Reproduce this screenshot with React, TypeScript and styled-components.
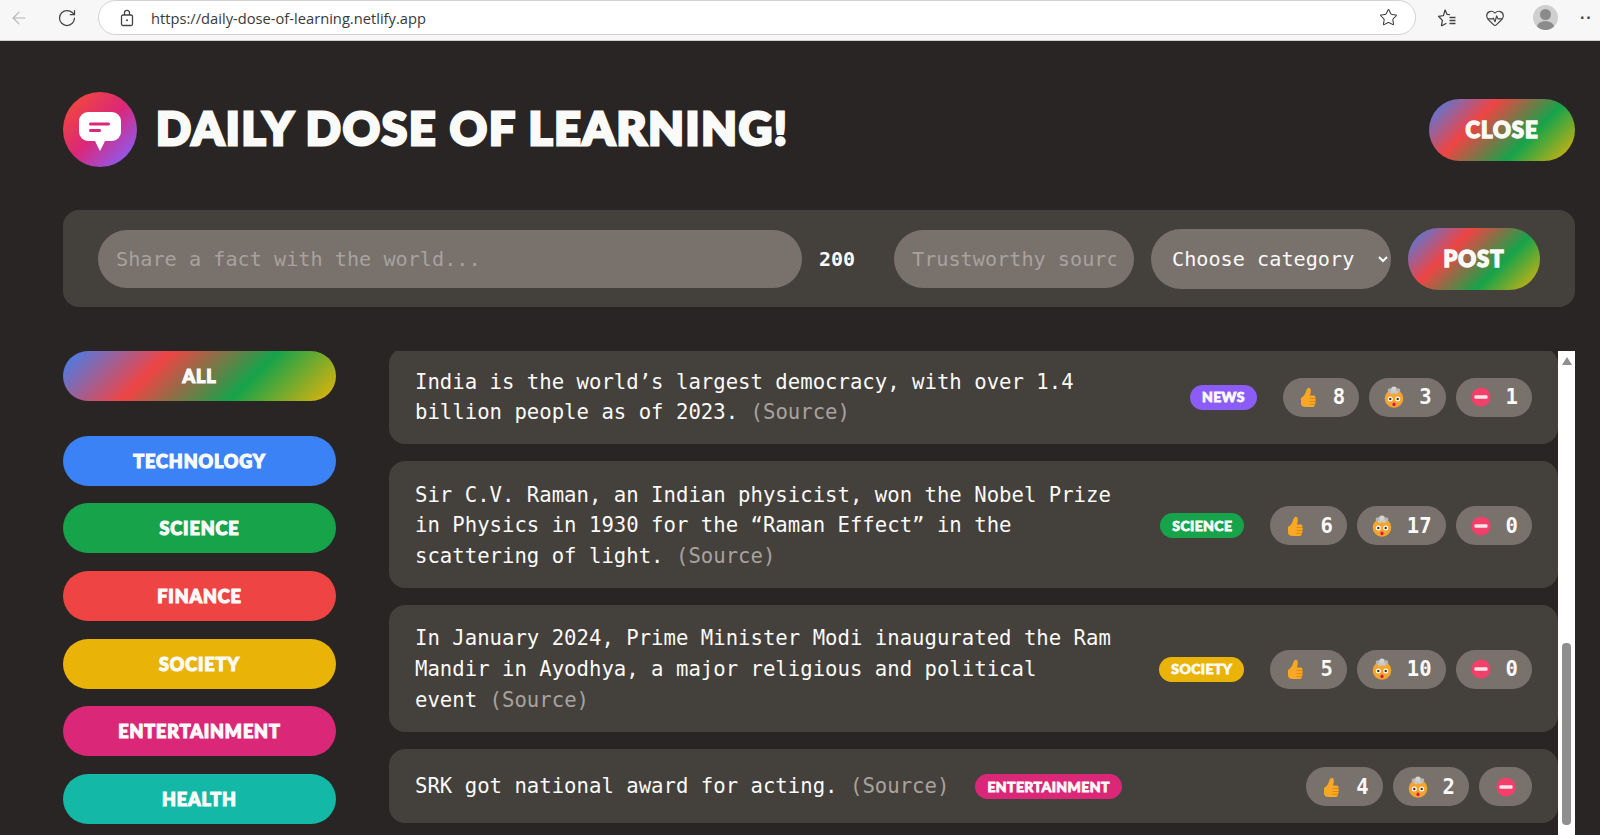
import React from 'react';
import styled, { createGlobalStyle, css } from 'styled-components';
import { ArrowLeft, RotateCw, Star, HeartPulse } from 'lucide-react';

const rainbow = 'linear-gradient(135deg, #3b82f6, #ef4444, #16a34a, #eab308)';
const monoFont = '"DejaVu Sans Mono", "Liberation Mono", monospace';
const displayFont = '"Lato", "DejaVu Sans", sans-serif';

const display = css`
    font-family: ${displayFont};
    font-weight: 900;
    color: #fafaf9;
    -webkit-text-stroke: 1.2px #fafaf9;
    text-transform: uppercase;
`;

const GlobalStyle = createGlobalStyle`
    * {
        box-sizing: border-box;
        margin: 0;
        padding: 0;
    }

    html, body {
        height: 835px;
        overflow: hidden;
        background: #292524;
    }

    input::placeholder {
        color: #a8a29e;
    }
`;

const BrowserBar = styled.div`
    display: flex;
    align-items: center;
    height: 41px;
    padding: 0 0 5px 9px;
    background: #f7f7f7;
    border-bottom: 1px solid #cfcfcf;
    color: #444;
    overflow: hidden;
`;

const BarIcon = styled.span<{ $faded?: boolean; $width: number; $gap: number }>`
    display: flex;
    justify-content: center;
    flex-shrink: 0;
    width: ${p => p.$width}px;
    margin-left: ${p => p.$gap}px;
    color: ${p => (p.$faded ? '#b4b4b4' : '#444')};
`;

const AddressPill = styled.div`
    display: flex;
    align-items: center;
    flex-shrink: 0;
    width: 1318px;
    height: 35px;
    margin-left: 20px;
    padding: 0 17px 0 20px;
    background: #fff;
    border: 1.5px solid #d2d2d2;
    border-radius: 18px;
    font: 14.7px "Open Sans", sans-serif;
    color: #3a3a3a;
`;

const Url = styled.span`
    flex: 1;
    margin-left: 16px;
`;

const Avatar = styled.span`
    position: relative;
    flex-shrink: 0;
    width: 25px;
    height: 25px;
    margin-left: 27px;
    border-radius: 50%;
    background: #cfcfcf;
    overflow: hidden;

    &::before {
        content: '';
        position: absolute;
        left: 7px;
        top: 4px;
        width: 11px;
        height: 11px;
        border-radius: 50%;
        background: #8b8b8b;
    }

    &::after {
        content: '';
        position: absolute;
        left: 4px;
        top: 16px;
        width: 17px;
        height: 12px;
        border-radius: 50%;
        background: #8b8b8b;
    }
`;

const Dots = styled.span`
    margin-left: 22px;
    font: bold 16px "Liberation Sans", sans-serif;
    letter-spacing: 1px;
    color: #444;
`;

const Page = styled.div`
    padding: 51px 25px 0 63px;
    font-family: ${monoFont};
    color: #fafaf9;
`;

const Header = styled.header`
    display: flex;
    align-items: center;
    justify-content: space-between;
    height: 75px;
    margin-bottom: 43px;
`;

const Brand = styled.div`
    display: flex;
    align-items: center;
    gap: 19px;
`;

const LogoBadge = styled.div`
    display: flex;
    align-items: center;
    justify-content: center;
    width: 74px;
    height: 75px;
    padding-top: 4px;
    border-radius: 50%;
    background: linear-gradient(135deg, #ef4444 15%, #db2777 50%, #8b5cf6 90%);
`;

const Title = styled.h1`
    ${display}
    margin-top: -4px;
    font-size: 46px;
    line-height: 1;
    letter-spacing: 1.8px;
    -webkit-text-stroke-width: 3px;
`;

const GradientButton = styled.button<{ $width: number; $height: number; $size: number }>`
    ${display}
    width: ${p => p.$width}px;
    height: ${p => p.$height}px;
    flex-shrink: 0;
    border: none;
    border-radius: 100px;
    background: ${rainbow};
    font-size: ${p => p.$size}px;
    letter-spacing: 1px;
    -webkit-text-stroke-width: 1.5px;
`;

const FactForm = styled.form`
    display: flex;
    align-items: center;
    gap: 17px;
    height: 97px;
    margin-bottom: 44px;
    padding: 0 35px;
    background: #44403c;
    border-radius: 16px;
`;

const field = css`
    height: 58px;
    border: none;
    border-radius: 100px;
    background: #78716c;
    font-family: ${monoFont};
    font-size: 20.2px;
    color: #fafaf9;
`;

const FactInput = styled.input`
    ${field}
    flex: 1;
    min-width: 0;
    padding: 0 18px;
`;

const CharCount = styled.span`
    width: 58px;
    flex-shrink: 0;
    font-size: 20px;
    font-weight: 700;
`;

const SourceInput = styled.input`
    ${field}
    flex-shrink: 0;
    width: 240px;
    padding: 0 18px;
`;

const CategorySelect = styled.select`
    ${field}
    flex-shrink: 0;
    width: 240px;
    height: 60px;
    padding: 0 17px;
`;

const Main = styled.main`
    display: grid;
    grid-template-columns: 273px 1fr;
    column-gap: 53px;
    height: 484px;
`;

const CategoryList = styled.ul`
    display: flex;
    flex-direction: column;
    gap: 17.7px;
    list-style: none;
`;

const CategoryButton = styled.button<{ $bg: string; $all?: boolean }>`
    ${display}
    width: 100%;
    height: 50px;
    border: none;
    border-radius: 100px;
    background: ${p => p.$bg};
    font-size: 18px;
    letter-spacing: 0.9px;
    ${p => p.$all && 'margin-bottom: 17px;'}
`;

const FactArea = styled.div`
    display: flex;
    min-width: 0;
    overflow: hidden;
`;

const FactList = styled.ul`
    flex: 1;
    min-width: 0;
    display: flex;
    flex-direction: column;
    gap: 17px;
    margin-top: -3px;
    list-style: none;
`;

const Fact = styled.li`
    display: flex;
    align-items: center;
    gap: 26px;
    padding: 18.5px 26px 16.5px;
    background: #44403c;
    border-radius: 16px;
`;

const FactText = styled.p`
    font-size: 20.65px;
    line-height: 30.6px;
`;

const SourceLink = styled.a`
    color: #a8a29e;
`;

const Tag = styled.span<{ $bg: string }>`
    ${display}
    flex-shrink: 0;
    padding: 4.5px 12px;
    border-radius: 100px;
    background: ${p => p.$bg};
    font-size: 14px;
    line-height: 16px;
    letter-spacing: 0.4px;
    -webkit-text-stroke-width: 0.8px;
`;

const Votes = styled.div`
    display: flex;
    flex-shrink: 0;
    gap: 10px;
    margin-left: auto;
`;

const VoteButton = styled.button`
    display: flex;
    align-items: center;
    justify-content: center;
    gap: 15px;
    min-width: 53px;
    height: 39px;
    padding: 0 14px 0 15px;
    border: none;
    border-radius: 100px;
    background: #78716c;
    font-family: ${monoFont};
    font-size: 20.6px;
    font-weight: 700;
    color: #fafaf9;
`;

const Scrollbar = styled.div`
    flex-shrink: 0;
    display: flex;
    flex-direction: column;
    align-items: center;
    width: 17px;
    padding-top: 6px;
    background: #fff;
`;

const ScrollArrow = styled.span`
    width: 0;
    height: 0;
    border-left: 5.5px solid transparent;
    border-right: 5.5px solid transparent;
    border-bottom: 8px solid #8f8f8f;
`;

const ScrollThumb = styled.span`
    width: 9px;
    height: 182px;
    margin-top: 278px;
    background: #8f8f8f;
    border-radius: 4px;
`;

const Thumb = () => (
    <svg width="20" height="22" viewBox="0 0 20 22">
        <path d="M3 12c2.500-1.500 4.500-4 5.500-8 .5-2.500 3.500-3.500 4.200-.5.5 2.500-.5 4.500-.7 6h3.500c2 0 2.500 2 1.500 3 1 .8 1 2.300 0 3 .8.800.7 2.200-.3 2.800.4 1.400-.5 2.700-2 2.700H8c-3 0-5-1-5-3.500z" fill="#f9a825" />
        <path d="M11.500 12.500h6M11.500 15.500h6M11.500 18.300h5" stroke="#e0860e" strokeWidth="0.9" fill="none" />
    </svg>
);

const MindBlown = () => (
    <svg width="20" height="22" viewBox="0 0 20 22">
        <circle cx="10" cy="12.500" r="9.300" fill="#f5a52c" />
        <circle cx="6" cy="4.500" r="2.300" fill="#b9b6b4" />
        <circle cx="10" cy="3.200" r="2.800" fill="#d6d4d2" />
        <circle cx="14" cy="4.500" r="2.300" fill="#b9b6b4" />
        <circle cx="8" cy="6.200" r="2" fill="#c9c6c4" />
        <circle cx="12" cy="6.200" r="2" fill="#c9c6c4" />
        <circle cx="6.300" cy="13" r="2.500" fill="#fff" />
        <circle cx="13.700" cy="13" r="2.500" fill="#fff" />
        <circle cx="6.300" cy="13" r="1.200" fill="#4a2c1a" />
        <circle cx="13.700" cy="13" r="1.200" fill="#4a2c1a" />
        <ellipse cx="10" cy="18.300" rx="1.500" ry="1.900" fill="#d6134f" />
    </svg>
);

const NoEntry = () => (
    <svg width="20" height="20" viewBox="0 0 20 20">
        <circle cx="10" cy="10" r="9.600" fill="#f43f6b" />
        <rect x="3.500" y="8.300" width="13" height="3.400" rx="1" fill="#f6e6ea" />
    </svg>
);

const FavoritesIcon = () => (
    <svg width="20" height="20" viewBox="0 0 20 20" fill="none" stroke="#444" strokeWidth="1.300" strokeLinejoin="round">
        <path d="M8 1.800l2 4.500 3 .4M4.400 18l1-5.600L1.500 8.300l5-.7L8 1.800M4.400 18l5-2.800" />
        <path d="M12.500 9.500h6M12.500 12.500h6M12.500 15.500h6" />
    </svg>
);

const LockIcon = () => (
    <svg width="16" height="18" viewBox="0 0 16 18" fill="none" stroke="#444" strokeWidth="1.300">
        <rect x="2.500" y="6" width="11" height="10.500" rx="1.500" />
        <path d="M5.500 6V3.800a2.500 2.500 0 0 1 5 0V6" />
        <circle cx="8" cy="11.300" r="1" fill="#444" stroke="none" />
    </svg>
);

const LogoMark = () => (
    <svg width="42" height="39" viewBox="0 0 42 39">
        <path d="M9 0h24a9 9 0 0 1 9 9v11a9 9 0 0 1-9 9h-7l-5 10-5-10H9a9 9 0 0 1-9-9V9a9 9 0 0 1 9-9z" fill="#fff" />
        <rect x="10" y="10.500" width="21" height="3" rx="1.500" fill="#db2777" />
        <rect x="10" y="17" width="12" height="3" rx="1.500" fill="#db2777" />
    </svg>
);

const categories = [
    { name: 'technology', color: '#3b82f6' },
    { name: 'science', color: '#16a34a' },
    { name: 'finance', color: '#ef4444' },
    { name: 'society', color: '#eab308' },
    { name: 'entertainment', color: '#db2777' },
    { name: 'health', color: '#14b8a6' },
];

const facts = [
    { text: 'India is the world’s largest democracy, with over 1.4 billion people as of 2023.', tag: 'news', color: '#8b5cf6', votes: [8, 3, 1] },
    { text: 'Sir C.V. Raman, an Indian physicist, won the Nobel Prize in Physics in 1930 for the “Raman Effect” in the scattering of light.', tag: 'science', color: '#16a34a', votes: [6, 17, 0] },
    { text: 'In January 2024, Prime Minister Modi inaugurated the Ram Mandir in Ayodhya, a major religious and political event', tag: 'society', color: '#eab308', votes: [5, 10, 0] },
    { text: 'SRK got national award for acting.', tag: 'entertainment', color: '#db2777', votes: [4, 2, null] },
];

const voteIcons = [Thumb, MindBlown, NoEntry];

const App = () => {
    return (
        <>
            <GlobalStyle />
            <BrowserBar>
                <BarIcon $width={20} $gap={0} $faded><ArrowLeft size={20} strokeWidth={1.3} /></BarIcon>
                <BarIcon $width={22} $gap={27}><RotateCw size={20} strokeWidth={1.5} /></BarIcon>
                <AddressPill>
                    <LockIcon />
                    <Url>https://daily-dose-of-learning.netlify.app</Url>
                    <Star size={19} strokeWidth={1.3} />
                </AddressPill>
                <BarIcon $width={20} $gap={21}><FavoritesIcon /></BarIcon>
                <BarIcon $width={22} $gap={27}><HeartPulse size={20} strokeWidth={1.4} /></BarIcon>
                <Avatar />
                <Dots>··</Dots>
            </BrowserBar>
            <Page>
                <Header>
                    <Brand>
                        <LogoBadge><LogoMark /></LogoBadge>
                        <Title>Daily Dose of Learning!</Title>
                    </Brand>
                    <GradientButton type="button" $width={146} $height={62} $size={22}>Close</GradientButton>
                </Header>
                <FactForm>
                    <FactInput placeholder="Share a fact with the world..." />
                    <CharCount>200</CharCount>
                    <SourceInput placeholder="Trustworthy source..." />
                    <CategorySelect>
                        <option>Choose category</option>
                    </CategorySelect>
                    <GradientButton type="button" $width={132} $height={62} $size={22}>Post</GradientButton>
                </FactForm>
                <Main>
                    <CategoryList>
                        <li><CategoryButton $all $bg={rainbow}>All</CategoryButton></li>
                        {categories.map(category => (
                            <li key={category.name}>
                                <CategoryButton $bg={category.color}>{category.name}</CategoryButton>
                            </li>
                        ))}
                    </CategoryList>
                    <FactArea>
                        <FactList>
                            {facts.map(fact => (
                                <Fact key={fact.tag}>
                                    <FactText>
                                        {fact.text}{'\u00a0'}<SourceLink>(Source)</SourceLink>
                                    </FactText>
                                    <Tag $bg={fact.color}>{fact.tag}</Tag>
                                    <Votes>
                                        {fact.votes.map((count, index) => {
                                            const Icon = voteIcons[index];
                                            return (
                                                <VoteButton key={index} type="button">
                                                    <Icon />
                                                    {count !== null && <span>{count}</span>}
                                                </VoteButton>
                                            );
                                        })}
                                    </Votes>
                                </Fact>
                            ))}
                        </FactList>
                        <Scrollbar>
                            <ScrollArrow />
                            <ScrollThumb />
                        </Scrollbar>
                    </FactArea>
                </Main>
            </Page>
        </>
    );
}

export default App;
